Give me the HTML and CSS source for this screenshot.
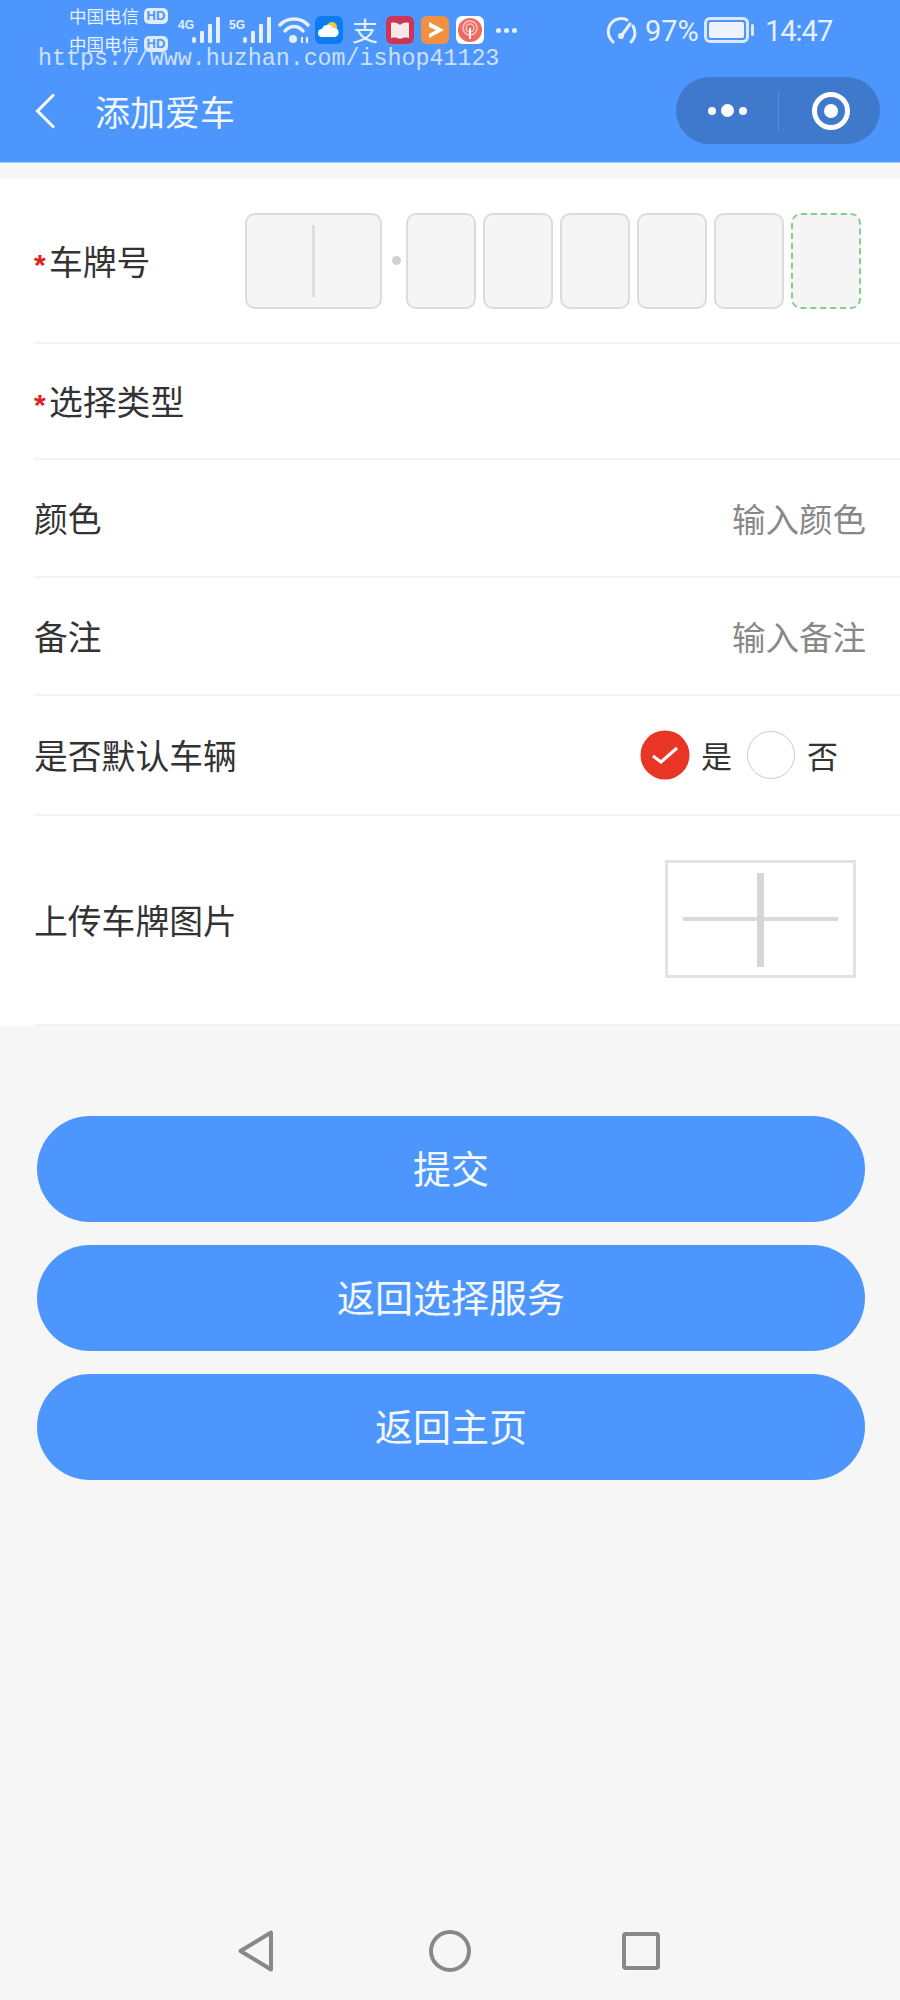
FILE: index.html
```html
<!DOCTYPE html>
<html lang="zh-CN">
<head>
  <meta charset="UTF-8">
  <title>添加爱车</title>
  <link rel="stylesheet" href="styles.css">
</head>
<body>

<div id="page">

  <div id="header">
    <div id="statusBar">
      <div id="carriers">
        <div class="carrier">中国电信<span class="hd">HD</span></div>
        <div class="carrier">中国电信<span class="hd">HD</span></div>
      </div>
      <span class="netLabel first">4G</span>
      <svg class="bars" width="28" height="26" viewBox="0 0 28 26"><g fill="#e6f0ff"><rect x="0" y="20" width="4" height="6" rx="2"/><rect x="8" y="14" width="4" height="12" rx="1"/><rect x="16" y="7" width="4" height="19" rx="1"/><rect x="24" y="0" width="4" height="26" rx="1"/></g></svg>
      <span class="netLabel second">5G</span>
      <svg class="bars" width="28" height="26" viewBox="0 0 28 26"><g fill="#e6f0ff"><rect x="0" y="20" width="4" height="6" rx="2"/><rect x="8" y="14" width="4" height="12" rx="1"/><rect x="16" y="7" width="4" height="19" rx="1"/><rect x="24" y="0" width="4" height="26" rx="1"/></g></svg>
      <svg class="wifi" width="32" height="27" viewBox="0 0 32 27"><g fill="none" stroke="#e6f0ff" stroke-width="3.5" stroke-linecap="round"><path d="M2 8 C9 0 23 0 30 8"/><path d="M7 14 C12 8 20 8 25 14"/></g><circle cx="15" cy="22" r="4" fill="#e6f0ff"/><path d="M24 20v6M29 20v6" stroke="#e6f0ff" stroke-width="2"/></svg>
      <svg class="app" width="28" height="28" viewBox="0 0 28 28"><rect width="28" height="28" rx="6" fill="#0c7df0"/><circle cx="17" cy="11" r="5" fill="#f6c445"/><path d="M7 21a4 4 0 0 1 0-8 6 6 0 0 1 11-1 4.500 4.500 0 0 1 2 9z" fill="#fff"/></svg>
      <span id="alipay">支</span>
      <svg class="app" width="28" height="28" viewBox="0 0 28 28"><rect width="28" height="28" rx="6" fill="#cc3555"/><path d="M5 7c4-1 7 0 9 2 2-2 5-3 9-2v15c-4-1-7 0-9 1-2-1-5-2-9-1z" fill="#fbe9ea"/></svg>
      <svg class="app" width="28" height="28" viewBox="0 0 28 28"><rect width="28" height="28" rx="6" fill="#ef9140"/><path d="M8 6l15 8-15 8v-4l7-4-7-3z" fill="#fff"/></svg>
      <svg class="app" width="28" height="28" viewBox="0 0 28 28"><rect width="28" height="28" rx="6" fill="#fff"/><circle cx="14" cy="14" r="12" fill="#ee6a62"/><g fill="none" stroke="#f9c5c0" stroke-width="1.500"><circle cx="14" cy="12" r="7"/><circle cx="14" cy="12" r="4"/></g><path d="M14 12v11" stroke="#fff" stroke-width="2"/></svg>
      <div id="moreDots"><i></i><i></i><i></i></div>

      <svg id="gauge" width="32" height="27" viewBox="0 0 32 27"><g fill="none" stroke="#e6f0ff" stroke-width="3" stroke-linecap="round"><path d="M7 25C0 18 1 8 9 3c5-2 9-2 12 0"/><path d="M27 9c3 6 2 12-2 16"/><path d="M24 7l-8 11"/></g><circle cx="15" cy="19" r="3" fill="#e6f0ff"/></svg>
      <span id="battPct">97%</span>
      <div id="battery"><div id="battFill"></div></div>
      <div id="battCap"></div>
      <span id="clock">14:47</span>
    </div>

    <div id="watermark">https://www.huzhan.com/ishop41123</div>

    <div id="navBar">
      <svg id="back" width="20" height="36" viewBox="0 0 20 36"><path d="M19 1.500 L2.500 18 L19 34.500" fill="none" stroke="#fff" stroke-width="3"/></svg>
      <div id="navTitle">添加爱车</div>
      <div id="capsule">
        <div id="capsuleDots"><i></i><i class="big"></i><i></i></div>
        <div id="capsuleLine"></div>
        <div id="capsuleTarget"><div></div></div>
      </div>
    </div>
  </div>

  <div id="form">

    <div class="row rowPlate">
      <div class="label"><span class="star">*</span>车牌号</div>
      <div id="plate">
        <div class="plateBox wide"><div class="caret"></div></div>
        <div class="plateDot"></div>
        <div class="plateBox"></div>
        <div class="plateBox"></div>
        <div class="plateBox"></div>
        <div class="plateBox"></div>
        <div class="plateBox"></div>
        <div class="plateBox newEnergy"></div>
      </div>
    </div>

    <div class="row rowType">
      <div class="label"><span class="star">*</span>选择类型</div>
    </div>

    <div class="row rowText">
      <div class="label">颜色</div>
      <div class="placeholder">输入颜色</div>
    </div>

    <div class="row rowText">
      <div class="label">备注</div>
      <div class="placeholder">输入备注</div>
    </div>

    <div class="row rowDefault">
      <div class="label">是否默认车辆</div>
      <div id="radios">
        <svg class="radio" width="50" height="50" viewBox="0 0 50 50"><circle cx="25" cy="25" r="24.500" fill="#e83525"/><path d="M13 26l8 6 16-14" fill="none" stroke="#fff" stroke-width="3"/></svg>
        <span class="radioText">是</span>
        <div class="radioOff"></div>
        <span class="radioText">否</span>
      </div>
    </div>

    <div class="row rowUpload">
      <div class="label">上传车牌图片</div>
      <div id="upload">
        <div class="plusH"></div>
        <div class="plusV"></div>
      </div>
    </div>

  </div>

  <div id="buttons">
    <div class="btn">提交</div>
    <div class="btn">返回选择服务</div>
    <div class="btn">返回主页</div>
  </div>

  <div id="sysNav">
    <svg width="36" height="42" viewBox="0 0 36 42"><path d="M2.500 21 L33 2.500 V39.500 Z" fill="none" stroke="#888" stroke-width="4" stroke-linejoin="round"/></svg>
    <svg width="42" height="42" viewBox="0 0 42 42"><circle cx="21" cy="21" r="19" fill="none" stroke="#888" stroke-width="4"/></svg>
    <svg width="38" height="38" viewBox="0 0 38 38"><rect x="2" y="2" width="34" height="34" rx="2" fill="none" stroke="#888" stroke-width="4"/></svg>
  </div>

</div>

</body>
</html>
```

FILE: styles.css
```css
* {
  box-sizing: border-box;
}

body {
  margin: 0;
  background-color: #f6f6f6;
  font-family: "Noto Sans CJK SC", "Liberation Sans", sans-serif;
  color: #333;
}

#page {
  position: relative;
  width: 900px;
  height: 2000px;
  display: flex;
  flex-direction: column;
  overflow: hidden;
}

/* header */

#header {
  position: relative;
  height: 163px;
  background-color: #4c96fe;
  border-bottom: 1px solid #a9cdfb;
}

#statusBar {
  height: 77px;
  padding-left: 69px;
  padding-top: 16px;
  display: flex;
  align-items: flex-start;
  color: #e6f0ff;
}

#carriers {
  width: 100px;
  margin-top: -6px;
}

.carrier {
  display: flex;
  align-items: center;
  height: 28px;
  font-size: 17.500px;
  line-height: 18px;
  margin-top: -8px;
  margin-bottom: 8px;
  white-space: nowrap;
}

.hd {
  margin-left: 5px;
  width: 24px;
  height: 16px;
  border-radius: 5px;
  background-color: #e0ebfd;
  color: #4c96fe;
  font-family: "Liberation Sans", sans-serif;
  font-weight: bold;
  font-size: 13px;
  line-height: 16px;
  text-align: center;
}

.netLabel {
  font-family: "Liberation Sans", sans-serif;
  font-weight: bold;
  font-size: 12px;
  line-height: 14px;
  margin-top: 2px;
  width: 14px;
}

.netLabel.first {
  margin-left: 9px;
}

.netLabel.second {
  margin-left: 9px;
}

.bars {
  margin-top: 1px;
}

.wifi {
  margin-left: 7px;
  margin-top: 1px;
}

.app {
  flex-shrink: 0;
  margin-left: 7px;
}

.wifi + .app {
  margin-left: 5px;
}

#alipay {
  width: 27px;
  margin-left: 9px;
  margin-right: 0;
  font-size: 26px;
  line-height: 28px;
  color: #e6f0ff;
}

#moreDots {
  margin-left: 12px;
  margin-top: 12px;
  display: flex;
  gap: 3px;
}

#moreDots i {
  width: 5px;
  height: 5px;
  border-radius: 50%;
  background-color: #e6f0ff;
}

#gauge {
  margin-left: 89px;
  margin-top: 1px;
}

#battPct {
  margin-left: 7px;
  width: 55px;
  font-family: "Roboto", sans-serif;
  font-size: 29px;
  line-height: 30px;
  white-space: nowrap;
}

#battery {
  margin-left: 4px;
  margin-top: 1px;
  width: 45px;
  height: 26px;
  border: 3px solid #dbe8fd;
  border-radius: 6px;
  padding: 2px;
}

#battFill {
  width: 100%;
  height: 100%;
  border-radius: 2px;
  background-color: #eef3fd;
}

#battCap {
  margin-left: 2px;
  margin-top: 8px;
  width: 3px;
  height: 12px;
  border-radius: 2px;
  background-color: #dbe8fd;
}

#clock {
  margin-left: 11px;
  font-family: "Roboto", sans-serif;
  font-size: 29px;
  line-height: 30px;
  letter-spacing: -1px;
}

#watermark {
  position: absolute;
  left: 38px;
  top: 46px;
  font-family: "Liberation Mono", monospace;
  font-size: 23.300px;
  line-height: 26px;
  color: #cfe0fc;
  white-space: nowrap;
}

#navBar {
  height: 67px;
  padding-left: 35px;
  padding-right: 20px;
  display: flex;
  align-items: center;
}

#navTitle {
  margin-left: 40px;
  font-size: 35px;
  line-height: 44px;
  color: #f2f7ff;
}

#capsule {
  margin-left: auto;
  width: 204px;
  height: 67px;
  border-radius: 34px;
  background-color: #3f79cc;
  display: flex;
  align-items: center;
}

#capsuleDots {
  width: 102px;
  display: flex;
  justify-content: center;
  align-items: center;
  gap: 5px;
}

#capsuleDots i {
  width: 8px;
  height: 8px;
  border-radius: 50%;
  background-color: #fff;
}

#capsuleDots i.big {
  width: 13px;
  height: 13px;
}

#capsuleLine {
  width: 1px;
  height: 40px;
  background-color: #5a8dd6;
}

#capsuleTarget {
  margin-left: 33px;
  width: 38px;
  height: 38px;
  border: 5px solid #fff;
  border-radius: 50%;
  display: flex;
  align-items: center;
  justify-content: center;
}

#capsuleTarget div {
  width: 14px;
  height: 14px;
  border-radius: 50%;
  background-color: #fff;
}

/* form */

#form {
  margin-top: 16px;
  height: 847px;
  background-color: #fff;
  padding-left: 34px;
}

.row {
  display: flex;
  align-items: center;
  justify-content: space-between;
  padding-right: 34px;
  border-bottom: 2px solid #f3f3f3;
}

.rowPlate {
  height: 165px;
}

.rowType {
  height: 116px;
}

.rowText {
  height: 118px;
}

.rowDefault {
  height: 120px;
}

.rowUpload {
  height: 210px;
}

.label {
  font-size: 33.800px;
  line-height: 40px;
  white-space: nowrap;
}

.rowPlate .label,
.rowType .label {
  padding-top: 4px;
}

.star {
  display: inline-block;
  width: 15px;
  color: #e02020;
  font-family: "Liberation Sans", sans-serif;
  font-weight: bold;
  font-size: 30px;
}

.placeholder {
  font-size: 33.500px;
  line-height: 40px;
  color: #888;
}

#plate {
  margin-right: 5px;
  display: flex;
  align-items: center;
}

.plateBox {
  width: 70px;
  height: 96px;
  margin-left: 7px;
  background-color: #f5f5f5;
  border: 2px solid #dcdcdc;
  border-radius: 10px;
}

.plateBox.wide {
  width: 137px;
  margin-left: 0;
  display: flex;
  align-items: center;
  justify-content: center;
}

.plateBox.newEnergy {
  border: 2px dashed #7fd08c;
}

.caret {
  width: 3px;
  height: 72px;
  background-color: #dedede;
}

.plateDot {
  width: 9px;
  height: 9px;
  margin-left: 10px;
  margin-right: -2px;
  border-radius: 50%;
  background-color: #d0d0d0;
}

#radios {
  margin-right: 28px;
  display: flex;
  align-items: center;
}

.radioText {
  margin-left: 11px;
  font-size: 31px;
  line-height: 40px;
}

.radioOff {
  width: 48px;
  height: 48px;
  margin-left: 15px;
  border: 1.500px solid #ccc;
  border-radius: 50%;
}

.radioOff + .radioText {
  margin-left: 12px;
}

#upload {
  position: relative;
  margin-right: 10px;
  margin-bottom: 3px;
  width: 191px;
  height: 118px;
  border: 3px solid #e2e2e2;
  filter: blur(0.6px);
}

.plusH {
  position: absolute;
  left: 15px;
  top: 54px;
  width: 155px;
  height: 4px;
  background-color: #dadada;
}

.plusV {
  position: absolute;
  left: 89px;
  top: 10px;
  width: 7px;
  height: 94px;
  background-color: #d6d6d6;
}

/* buttons */

#buttons {
  margin-top: 90px;
  padding: 0 35px 0 37px;
  display: flex;
  flex-direction: column;
  gap: 23px;
}

.btn {
  height: 106px;
  border-radius: 53px;
  background-color: #4c96fe;
  color: #f4f8ff;
  font-size: 38px;
  line-height: 102px;
  text-align: center;
}

/* android nav */

#sysNav {
  margin-top: auto;
  height: 100px;
  padding-left: 238px;
  display: flex;
  align-items: flex-start;
}

#sysNav svg {
  margin-top: 30px;
}

#sysNav svg:nth-child(2) {
  margin-left: 155px;
}

#sysNav svg:nth-child(3) {
  margin-left: 151px;
  margin-top: 32px;
}
```
